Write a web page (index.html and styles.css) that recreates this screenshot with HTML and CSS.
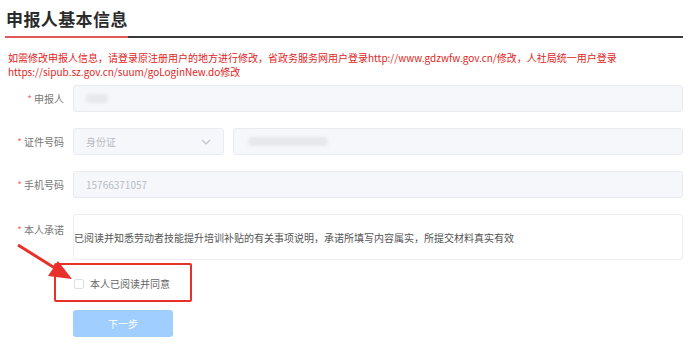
FILE: index.html
```html
<!DOCTYPE html>
<html lang="zh">
<head>
<meta charset="utf-8">
<link rel="stylesheet" href="styles.css">
</head>
<body>
<div class="page">
  <h1 class="title">申报人基本信息</h1>
  <div class="rule"><span class="rule-red"></span><span class="rule-dark"></span></div>
  <p class="notice">如需修改申报人信息，请登录原注册用户的地方进行修改，省政务服务网用户登录http://www.gdzwfw.gov.cn/修改，人社局统一用户登录<br>https://sipub.sz.gov.cn/suum/goLoginNew.do修改</p>
  <form class="form">
    <div class="row">
      <label class="label"><i>*</i>申报人</label>
      <div class="input grow"><span class="blur short"></span></div>
    </div>
    <div class="row">
      <label class="label"><i>*</i>证件号码</label>
      <div class="input select"><span class="ph">身份证</span><svg class="chev" width="10" height="6" viewBox="0 0 10 6"><path d="M1 1l4 4 4-4" fill="none" stroke="#c0c4cc" stroke-width="1.2"/></svg></div>
      <div class="input grow"><span class="blur long"></span></div>
    </div>
    <div class="row">
      <label class="label"><i>*</i>手机号码</label>
      <div class="input grow"><span class="ph">15766371057</span></div>
    </div>
    <div class="row top">
      <label class="label"><i>*</i>本人承诺</label>
      <div class="textarea grow">已阅读并知悉劳动者技能提升培训补贴的有关事项说明，承诺所填写内容属实，所提交材料真实有效</div>
    </div>
    <div class="agree-wrap">
      <div class="agree"><span class="box"></span>本人已阅读并同意</div>
    </div>
    <div class="btn-row"><button type="button" class="btn">下一步</button></div>
  </form>
  <svg class="arrow" width="70" height="45" viewBox="0 0 70 45">
    <line x1="2" y1="2" x2="42" y2="27" stroke="#e8312a" stroke-width="3"/>
    <polygon points="56,36 32,33 42,18" fill="#e8312a"/>
  </svg>
</div>
</body>
</html>
```

FILE: styles.css
```css
* { box-sizing: border-box; }
body {
  margin: 0;
  background: #fff;
  font-family: "Noto Sans CJK SC", "Liberation Sans", sans-serif;
}
.page {
  position: relative;
  padding: 6px 10px 0 5px;
}
.title {
  margin: 0 0 0 1px;
  font-size: 17px;
  line-height: 26px;
  font-weight: 700;
  color: #2b2b2b;
  letter-spacing: 0.4px;
}
.rule {
  display: flex;
  margin-top: 4px;
  height: 2px;
}
.rule-red { width: 123px; background: #e0585a; }
.rule-dark { flex: 1; background: #3a3a3a; }
.notice {
  margin: 13px 0 0 3px;
  font-size: 10px;
  line-height: 14px;
  color: #e0251d;
}
.form {
  margin-top: 6px;
  display: flex;
  flex-direction: column;
}
.row {
  display: flex;
  align-items: center;
  gap: 9px;
  margin-bottom: 16px;
}
.row.top { align-items: flex-start; }
.label {
  width: 59px;
  text-align: right;
  font-size: 10px;
  color: #777;
  flex: none;
}
.row.top .label { padding-top: 8px; }
.label i { font-style: normal; color: #f56c6c; margin-right: 2px; }
.input {
  height: 27px;
  border: 1px solid #e9ebf0;
  border-radius: 3px;
  background: #f5f7fa;
  display: flex;
  align-items: center;
  padding: 0 12px;
}
.grow { flex: 1; }
.select { width: 151px; justify-content: space-between; flex: none; }
.ph { font-size: 10px; color: #b8bcc4; }
.blur {
  display: block;
  height: 9px;
  border-radius: 4px;
  background: #e6e8ec;
  filter: blur(1.5px);
}
.blur.short { width: 22px; }
.blur.long { width: 80px; margin-left: 2px; }
.textarea {
  height: 46px;
  border: 1px solid #ebedf0;
  border-radius: 3px;
  background: #fff;
  font-size: 10px;
  color: #555;
  padding: 17px 0 0 0;
  line-height: 12px;
}
.agree-wrap {
  margin-top: -13px;
  margin-left: 49px;
}
.agree {
  width: 138px;
  height: 39px;
  border: 2px solid #e8312a;
  border-radius: 2px;
  display: flex;
  align-items: center;
  font-size: 10px;
  color: #666;
  padding-left: 18px;
  padding-top: 2px;
}
.box {
  width: 10px;
  height: 10px;
  border: 1px solid #dcdfe6;
  border-radius: 2px;
  margin-right: 6px;
  background: #fff;
}
.btn-row { margin-top: 7px; margin-left: 68px; }
.btn {
  width: 100px;
  height: 27px;
  border: none;
  border-radius: 3px;
  background: #a0cfff;
  color: #fff;
  font-size: 10px;
  font-family: inherit;
}
.arrow {
  position: absolute;
  left: 16px;
  top: 243px;
}
```
